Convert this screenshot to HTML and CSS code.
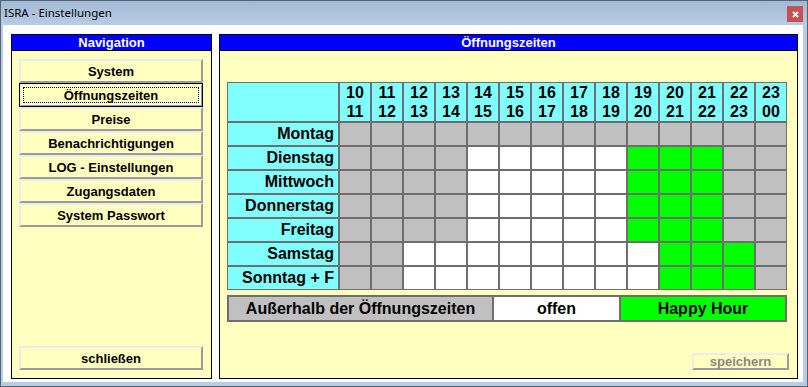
FILE: index.html
```
<!DOCTYPE html>
<html lang="de">
<head>
    <meta charset="UTF-8">
    <title>ISRA - Einstellungen</title>
    <link rel="stylesheet" href="styles.css">
</head>
<body>
    <div class="window">
        <div class="titlebar">
            <span class="title">ISRA - Einstellungen</span>
            <button class="close-btn" title="Schließen">
                <svg width="7" height="7" viewBox="0 0 7 7"><path d="M1 1 L6 6 M6 1 L1 6" stroke="#fff" stroke-width="1.8"/></svg>
            </button>
        </div>

        <div class="client">
            <div class="panel nav-panel">
                <div class="panel-header">Navigation</div>
                <div class="panel-body">
                    <button class="btn">System</button>
                    <button class="btn active">Öffnungszeiten</button>
                    <button class="btn">Preise</button>
                    <button class="btn">Benachrichtigungen</button>
                    <button class="btn">LOG - Einstellungen</button>
                    <button class="btn">Zugangsdaten</button>
                    <button class="btn">System Passwort</button>
                    <button class="btn btn-bottom">schließen</button>
                </div>
            </div>

            <div class="panel main-panel">
                <div class="panel-header">Öffnungszeiten</div>
                <div class="panel-body">
                    <div class="hours-grid" id="hoursGrid"></div>

                    <div class="legend">
                        <div class="legend-item closed">Außerhalb der Öffnungszeiten</div>
                        <div class="legend-item open">offen</div>
                        <div class="legend-item happy">Happy Hour</div>
                    </div>

                    <button class="btn save-btn" disabled>speichern</button>
                </div>
            </div>
        </div>
    </div>

    <script>
        // c = closed, o = open, h = happy hour (one letter per hour, 10:00 - 24:00)
        const schedule = [
            ['Montag',      'cccccccccccccc'],
            ['Dienstag',    'ccccooooohhhcc'],
            ['Mittwoch',    'ccccooooohhhcc'],
            ['Donnerstag',  'ccccooooohhhcc'],
            ['Freitag',     'ccccooooohhhcc'],
            ['Samstag',     'ccoooooooohhhc'],
            ['Sonntag + F', 'ccoooooooohhhc']
        ];

        function pad(n) {
            return String(n % 24).padStart(2, '0');
        }

        function buildGrid() {
            const grid = document.getElementById('hoursGrid');
            let html = '<div class="cell head"></div>';

            for (let h = 10; h < 24; h++) {
                html += `<div class="cell head hour">${pad(h)}<br>${pad(h + 1)}</div>`;
            }

            schedule.forEach(([day, slots]) => {
                html += `<div class="cell head day">${day}</div>`;
                slots.split('').forEach(s => {
                    html += `<div class="cell slot-${s}"></div>`;
                });
            });

            grid.innerHTML = html;
        }

        document.addEventListener('DOMContentLoaded', buildGrid);
    </script>
</body>
</html>
```

FILE: styles.css
```
html, body {
    margin: 0;
    padding: 0;
}
body {
    font-family: "Liberation Sans", Arial, sans-serif;
    background-color: #fff;
}
.window {
    box-sizing: border-box;
    width: 808px;
    height: 387px;
    border: 1px solid #566576;
    background-color: #b7cde5;
    display: flex;
    flex-direction: column;
}
.titlebar {
    height: 24px;
    flex-shrink: 0;
    display: flex;
    align-items: center;
    padding: 0 4px 0 3px;
    background: linear-gradient(#a2b8d4, #b7cde6);
}
.title {
    font-family: "Noto Sans", sans-serif;
    font-size: 11.5px;
    color: #000;
    margin-top: -1px;
}
.close-btn {
    margin-left: auto;
    margin-top: 2px;
    width: 16px;
    height: 16px;
    padding: 0;
    border: none;
    background-color: #c75050;
    display: flex;
    align-items: center;
    justify-content: center;
}
.client {
    flex: 1;
    display: flex;
    gap: 6px;
    margin: 0 4px 4px 2px;
    padding: 9px 5px 3px 8px;
    background-color: #fff;
}
.panel {
    display: flex;
    flex-direction: column;
    border: 1px solid #000;
    background-color: #ffffc0;
}
.nav-panel {
    width: 201px;
    box-sizing: border-box;
    margin-right: 1px;
}
.main-panel {
    flex: 1;
}
.panel-header {
    height: 15px;
    line-height: 15px;
    background-color: #0000ff;
    border-bottom: 1px solid #000;
    color: #fff;
    font-size: 13px;
    font-weight: bold;
    text-align: center;
}
.panel-body {
    flex: 1;
    display: flex;
    flex-direction: column;
}
.nav-panel .panel-body {
    padding: 8px 8px 8px 7px;
}
.main-panel .panel-body {
    padding: 31px 9px 8px 7px;
}

.btn {
    box-sizing: border-box;
    height: 24px;
    width: 100%;
    padding: 0;
    background-color: #ffffc0;
    border: 2px solid;
    border-color: #ececec #9c9c9c #9c9c9c #ececec;
    font-family: "Liberation Sans", Arial, sans-serif;
    font-size: 13px;
    font-weight: bold;
    color: #000;
}
.btn.active {
    border: 1px solid #000;
    box-shadow: inset 1px 1px #ececec, inset -1px -1px #9c9c9c;
    outline: 1px dotted #000;
    outline-offset: -5px;
}
.btn-bottom {
    margin-top: auto;
}
.save-btn {
    width: 97px;
    height: 17px;
    margin-top: auto;
    margin-right: -1px;
    align-self: flex-end;
    color: #888;
    line-height: 11px;
}

/* Opening hours grid */
.hours-grid {
    display: grid;
    grid-template-columns: 110px repeat(14, 30px);
    grid-template-rows: 38px repeat(7, 22px);
    gap: 2px;
    border: 1px solid #6e6e6e;
    background-color: #6e6e6e;
    width: max-content;
}
.cell {
    font-size: 16px;
    font-weight: bold;
    color: #000;
}
.cell.head {
    background-color: #80ffff;
}
.cell.hour {
    line-height: 19px;
    text-align: center;
}
.cell.day {
    line-height: 22px;
    text-align: right;
    padding-right: 4px;
}
.slot-c { background-color: #c0c0c0; }
.slot-o { background-color: #fff; }
.slot-h { background-color: #00ff00; }

.legend {
    display: flex;
    width: 560px;
    box-sizing: border-box;
    height: 27px;
    margin-top: 5px;
    border: 2px solid #6e6e6e;
}
.legend-item {
    font-size: 16px;
    font-weight: bold;
    line-height: 23px;
    text-align: center;
    color: #000;
}
.legend-item.closed {
    width: 263px;
    background-color: #c0c0c0;
    border-right: 2px solid #6e6e6e;
}
.legend-item.open {
    width: 125px;
    background-color: #fff;
    border-right: 2px solid #6e6e6e;
}
.legend-item.happy {
    flex: 1;
    background-color: #00ff00;
}
```
